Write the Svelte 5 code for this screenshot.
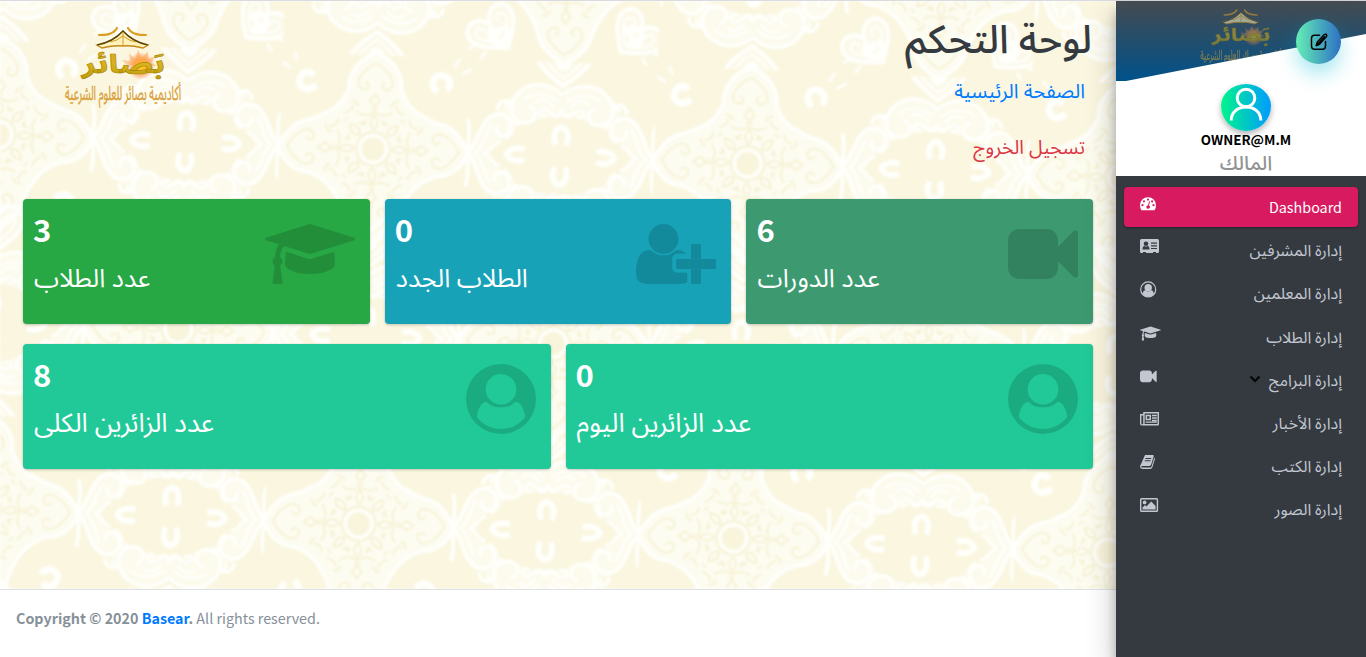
<script>
  const cards = [
    { value: 3, label: 'عدد الطلاب', color: '#28a745', icon: 'cap' },
    { value: 0, label: 'الطلاب الجدد', color: '#17a2b8', icon: 'plus' },
    { value: 6, label: 'عدد الدورات', color: '#3d9970', icon: 'video' },
    { value: 8, label: 'عدد الزائرين الكلى', color: '#20c997', icon: 'person', wide: true },
    { value: 0, label: 'عدد الزائرين اليوم', color: '#20c997', icon: 'person', wide: true }
  ];
  const menu = [
    { label: 'Dashboard', icon: 'gauge', active: true },
    { label: 'إدارة المشرفين', icon: 'id' },
    { label: 'إدارة المعلمين', icon: 'user' },
    { label: 'إدارة الطلاب', icon: 'cap' },
    { label: 'إدارة البرامج', icon: 'video', arrow: true },
    { label: 'إدارة الأخبار', icon: 'news' },
    { label: 'إدارة الكتب', icon: 'book' },
    { label: 'إدارة الصور', icon: 'image' }
  ];
  const quarters = [0, 90, 180, 270];
  const eighths = [0, 45, 90, 135, 180, 225, 270, 315];
  const mirrors = [[1, 1], [-1, 1], [1, -1], [-1, -1]];
  const capPath =
    'M1774 836l18 316q4 69-82 128t-235 93.5-323 34.5-323-34.5-235-93.5-82-128l18-316 574 181q22 7 48 7t48-7zm530-324q0 23-22 31l-1120 352q-4 1-10 1t-10-1L490 689q-43 34-71 111.5T385 979q63 36 63 109 0 69-58 107l58 433q2 14-8 25-9 11-24 11H224q-15 0-24-11-10-11-8-25l58-433q-58-38-58-107 0-73 65-111 11-207 98-330L22 543q-22-8-22-31t22-31L1142 129q4-1 10-1t10 1l1120 352q22 8 22 31z';
  const videoPath =
    'M1792 352v1088q0 42-39 59-13 5-25 5-27 0-45-19l-403-403v166q0 119-84.5 203.5t-203.5 84.5h-704q-119 0-203.5-84.5t-84.5-203.5v-704q0-119 84.5-203.5t203.5-84.5h704q119 0 203.5 84.5t84.5 203.5v165l403-402q18-19 45-19 12 0 25 5 39 17 39 59z';
  const plusPath =
    'M704 896q-159 0-271.5-112.5T320 512t112.5-271.5T704 128t271.5 112.5T1088 512 975.5 783.5 704 896zm960 128h352q13 0 22.5 9.5t9.5 22.5v192q0 13-9.5 22.5t-22.5 9.5h-352v352q0 13-9.5 22.5t-22.5 9.5h-192q-13 0-22.5-9.5t-9.5-22.5v-352h-352q-13 0-22.5-9.5t-9.5-22.5v-192q0-13 9.5-22.5t22.5-9.5h352V672q0-13 9.5-22.5t22.5-9.5h192q13 0 22.5 9.5t9.5 22.5v352zm-736 224q0 52 38 90t90 38h256v238q-68 50-171 50H267q-121 0-194-69T0 1365q0-53 3.5-103.5t14-109T44 1044t43-97.5 62-81 85.5-53.5T346 792q19 0 39 17 79 61 154.5 91.5T704 931t164.5-30.5T1023 809q20-17 39-17 132 0 217 96h-223q-52 0-90 38t-38 90v192z';
</script>

{#snippet logo()}
  <svg class="logo" viewBox="0 0 120 82" width="120" height="82">
    <defs>
      <linearGradient id="gold" x1="0" y1="0" x2="0" y2="1">
        <stop offset="0" stop-color="#e8a41c" /><stop offset=".5" stop-color="#d8b21c" /><stop offset="1" stop-color="#a98500" />
      </linearGradient>
      <radialGradient id="sun">
        <stop offset="0" stop-color="#ffd400" /><stop offset=".5" stop-color="#ff9d2e" stop-opacity=".8" /><stop offset="1" stop-color="#ff7a5c" stop-opacity="0" />
      </radialGradient>
    </defs>
    <circle cx="78" cy="39" r="14" fill="url(#sun)" />
    <path d="M64 38l-5-5 8 1-1-8 6 6 3-9 4 8 6-7 0 8 8-3-5 7 7 3z" fill="#ff9d4a" opacity=".45" />
    <path d="M36 8C42 8 50 8 54 1M83 8C77 8 69 8 65 1" fill="none" stroke="#dd9d22" stroke-width="2.200" stroke-linecap="round" />
    <path d="M34 18Q50 15 60 4Q70 15 85 18L80 21Q68 18 60 19Q52 18 39 21Z" fill="#fff2bd" stroke="#c38b18" stroke-width="1.300" />
    <path d="M34 18Q50 15 60 4Q70 15 85 18" fill="none" stroke="#51430f" stroke-width="1.200" />
    <path d="M60 5V19M47 15Q54 14 60 9Q66 14 73 15" fill="none" stroke="#d99b23" />
    <text class="name" x="19" y="46" textLength="83" lengthAdjust="spacingAndGlyphs" direction="rtl" text-anchor="end">بَصائر</text>
    <g transform="translate(0 73) scale(1 1.300)">
      <text class="motto" x="2" y="0" textLength="116" lengthAdjust="spacingAndGlyphs" direction="rtl" text-anchor="end">أكاديمية بصائر للعلوم الشرعية</text>
    </g>
  </svg>
{/snippet}

{#snippet bigIcon(name)}
  {#if name === 'cap'}
    <svg class="big" width="90" height="70" viewBox="0 0 2304 1792"><path d={capPath} /></svg>
  {:else if name === 'plus'}
    <svg class="big" width="80" height="70" viewBox="0 0 2048 1792"><path d={plusPath} /></svg>
  {:else if name === 'video'}
    <svg class="big" width="70" height="70" viewBox="0 0 1792 1792"><path d={videoPath} /></svg>
  {:else}
    <svg class="big" width="70" height="70" viewBox="0 0 70 70">
      <path fill-rule="evenodd" d="M35 0A35 35 0 1 1 35 70A35 35 0 1 1 35 0ZM35 10A15.3 15.3 0 1 0 35 40.6A15.3 15.3 0 1 0 35 10ZM10.7 52.7C12 45 15 38 20.5 37.7C24.5 42 29.5 43.3 35 43.3S45.5 42 49.5 37.7C55 38 58 45 59.3 52.7C53 61 44 65 35 65S17 61 10.7 52.7Z" />
    </svg>
  {/if}
{/snippet}

{#snippet navIcon(name)}
  <svg class="nav-icon" viewBox="0 0 22 18" width="22" height="18">
    {#if name === 'gauge'}
      <path fill-rule="evenodd" d="M8 2.2A8 8 0 0 0 0 10.3Q0 12.7 1.2 14.8Q1.5 15.3 2 15.3H14Q14.5 15.3 14.8 14.8Q16 12.700 16 10.3A8 8 0 0 0 8 2.2ZM8 3.5A1.1 1.1 0 1 1 8 5.700A1.1 1.1 0 1 1 8 3.5ZM4 5.2A1.1 1.1 0 1 1 4 7.400A1.1 1.1 0 1 1 4 5.2ZM2.500 9.100A1.1 1.1 0 1 1 2.500 11.300A1.1 1.1 0 1 1 2.500 9.100ZM13.500 9.100A1.1 1.1 0 1 1 13.500 11.300A1.1 1.1 0 1 1 13.500 9.100ZM12.100 5.300A1.1 1.1 0 1 1 12.100 7.500A1.1 1.1 0 1 1 12.100 5.300ZM9.100 6.300L10 6.500L9 10.400A1.800 1.800 0 1 1 8.100 10.200Z" />
    {:else if name === 'id'}
      <path fill-rule="evenodd" d="M1.500 1H17.500Q19 1 19 2.500V13.500Q19 15 17.500 15H16V14H13V15H6V14H3V15H1.500Q0 15 0 13.500V2.500Q0 1 1.500 1ZM6 3.500A2.300 2.300 0 1 0 6 8.100A2.300 2.300 0 1 0 6 3.500ZM2.500 11.500H9.500Q9.500 8 7.500 8Q6 9 4.500 8Q2.500 8 2.500 11.500ZM11 4.500V5.700H17V4.500ZM11 7.200V8.400H17V7.200ZM11 9.900V11.100H17V9.900Z" />
    {:else if name === 'user'}
      <circle cx="8.200" cy="8.400" r="7.500" fill="none" stroke="currentColor" stroke-width="1.200" />
      <circle cx="8.200" cy="6.700" r="3.700" />
      <path d="M2.500 13Q3 9.300 5.300 9.200Q8.200 12 11.100 9.200Q13.400 9.300 13.900 13Q11.700 15.800 8.200 15.800T2.500 13Z" />
    {:else if name === 'cap'}
      <g transform="translate(0 .3) scale(.0091)"><path d={capPath} /></g>
    {:else if name === 'video'}
      <g transform="translate(0 0) scale(.0093)"><path d={videoPath} /></g>
    {:else if name === 'news'}
      <path fill-rule="evenodd" d="M3.200 1H19V13Q19 14.500 17.700 14.500H1.900Q0 14.500 0 12.500V3H3.200ZM4.700 2.500V12.500Q4.700 12.900 4.500 13H17.200Q17.500 13 17.500 12.700V2.500ZM1.400 4.400V12.400A.9.9 0 0 0 3.200 12.400V4.400ZM5.600 3.800H11V9.200H5.600ZM7.100 5.300V7.700H9.500V5.300ZM12 3.800H16.800V5.200H12ZM12 6.300H16.800V7.700H12ZM12 8.800H16.800V10.200H12ZM5.600 10.400H16.800V11.800H5.600Z" />
    {:else if name === 'book'}
      <path fill-rule="evenodd" d="M5 1H12.800Q14 1.100 13.700 2.300L11.200 10.600Q10.800 12 9.500 12H2Q1 12 1.200 12.700Q1.400 13.500 2.400 13.500H10.300Q11.300 13.500 11.600 12.500L14.300 3.400Q15.200 4 14.900 5L12.500 13Q12 14.900 10 14.900H2.400Q0 14.900 0 12.500Q0 11.700.8 10.400ZM5.600 4L5.300 5H11L11.300 4ZM5 6.300L4.700 7.300H10.300L10.600 6.300Z" />
    {:else}
      <path fill-rule="evenodd" d="M1.500 1H16.700Q18.100 1 18.100 2.500V13.500Q18.100 15 16.700 15H1.500Q0 15 0 13.500V2.500Q0 1 1.500 1ZM1.400 2.400V13.600H16.700V2.400Z" />
      <circle cx="4.600" cy="5.400" r="1.900" />
      <path d="M2.500 12.600V10.400L5 8L6.400 9.400L11.200 4.600L15.600 9V12.600Z" />
    {/if}
  </svg>
{/snippet}

<div class="layout">
  <main>
    <div class="content">
      <svg class="damask" width="1116" height="588" aria-hidden="true">
        <defs>
          <g id="scroll" fill="none" stroke="#fffffb">
            <path d="M0 -61C10 -72 32 -76 46 -60Q54 -54 58 -44C80 -44 84 -10 93 0L70 0Q62 -14 50 -24Q36 -34 14 -38L0 -46Z" fill="#fffffb" fill-opacity=".5" stroke="none" />
            <path stroke-width="4" d="M0 -61C10 -72 32 -76 46 -60C56 -46 50 -32 36 -32C24 -33 24 -47 34 -49" />
            <path stroke-width="3" d="M4 -54C14 -62 30 -64 38 -55M8 -48C14 -56 22 -58 26 -52M6 -40C12 -42 14 -50 22 -44C24 -40 18 -38 15 -40" />
            <path stroke-width="4" d="M93 0C84 -8 82 -30 70 -38C58 -44 46 -34 52 -22C58 -14 68 -20 64 -28" />
            <path stroke-width="3" d="M86 0C76 -6 76 -22 70 -29M77 0C68 -4 66 -12 60 -12M48 -26q2 8 8 11M42 -30q4 -4 10 -2M58 -46q-4 -8 -10 -2" />
            <path stroke-width="4" d="M51 -52q12 -4 14 8M94 0q-4 -20 0 -34" />
          </g>
          <g id="lobes">
            {#each mirrors as [a, b]}<use href="#scroll" transform="scale({a} {b})" />{/each}
            <g fill="none" stroke="#fffffb" stroke-width="6">
              <path d="M-5 -11C-9 -20 -6 -28 0 -29C6 -28 9 -20 5 -11" />
              <path d="M-5 11C-9 20 -6 28 0 29C6 28 9 20 5 11" />
              <path d="M-36 -5C-44 -8 -52 -5 -54 0C-52 5 -44 8 -36 5" />
              <path d="M36 -5C44 -8 52 -5 54 0C52 5 44 8 36 5" />
            </g>
            <path d="M-10 -42q5 5 10 -2q5 7 10 2M-10 42q5 -5 10 2q5 -7 10 -2" fill="none" stroke="#fffffb" stroke-width="5" />
          </g>
          <g id="rosette">
            <path d="M0 -95C15 -92 28 -76 26 -60Q34 -40 48 -35Q60 -28 70 -26C82 -22 90 -10 95 0C90 15 78 26 64 25Q46 32 38 44Q30 55 27 66C24 80 12 90 0 95C-12 90 -24 80 -27 66Q-30 55 -38 44Q-46 32 -64 25C-78 26 -90 15 -95 0C-90 -10 -82 -22 -70 -26Q-60 -28 -48 -35Q-34 -40 -26 -60C-28 -76 -15 -92 0 -95Z" fill="#fdfcf1" stroke="#fffffb" stroke-width="4" />
            {#each quarters as a}
              <g transform="rotate({a})" fill="none" stroke="#f7f2d4" stroke-width="2">
                <path d="M0 -86C-14 -78 -22 -66 -14 -60C-7 -57 -4 -65 -10 -67M0 -86C14 -78 22 -66 14 -60C7 -57 4 -65 10 -67M0 -55l-5 7 5 6 5 -6z" />
                <path d="M-30 -35q8 -2 9 -9M30 -35q-8 -2 -9 -9M-18 -37q9 7 18 0q9 7 18 0M-24 -48q7 0 8 6M24 -48q-7 0 -8 6" />
                <path stroke="#fffffb" stroke-width="7" d="M62 -59C53 -68 59 -78 67 -76C75 -74 77 -66 71 -62" />
                <path stroke="#fffffb" stroke-width="3" d="M84 -94l-6 9 M96 -84l-10 6" />
              </g>
            {/each}
            {#each eighths as a}
              <g transform="rotate({a})" fill="none" stroke="#f5efcd" stroke-width="1.500"><path d="M0 -19q-7 -7 0 -15q7 8 0 15M-8 -29l-4 6M8 -29l4 6M-3 -40h6" /></g>
            {/each}
            <circle r="13" fill="#f9f5dc" stroke="#fffffb" stroke-width="3" />
            <circle r="17" fill="none" stroke="#f5efcd" stroke-width="1.500" />
          </g>
          <g id="heart" fill="none" stroke="#fffffb">
            <path stroke-width="4.500" fill="#fffffb" fill-opacity=".35" d="M0 27C-20 13 -34 0 -26 -14C-17 -24 -3 -18 0 -5C3 -18 17 -24 26 -14C34 0 20 13 0 27Z" />
            <path stroke-width="2.500" d="M0 19C-13 10 -24 -2 -18 -8C-12 -13 -7 -6 -11 -2M0 19C13 10 24 -2 18 -8C12 -13 7 -6 11 -2" />
            <path stroke-width="7" stroke-linecap="round" d="M-4 5q4 6 8 0" />
          </g>
          <pattern id="pat" width="375" height="375" patternUnits="userSpaceOnUse" patternTransform="translate(373 148) rotate(2.200) translate(-93.750 -93.750)">
            <g transform="translate(93.750 93.750)">
              {#each [[0, 0], [187.5, 187.5]] as [x, y]}<use href="#rosette" {x} {y} />{/each}
              {#each [[187.5, 0], [0, 187.5], [187.5, 375], [-187.5 + 375, -375]] as [x, y]}<use href="#lobes" {x} {y} />{/each}
              {#each [[187.5, 0], [0, 187.5]] as [x, y]}
                <use href="#heart" x={x} y={y - 97} />
                <use href="#heart" transform="translate({x} {y + 97}) scale(1 -1)" />
              {/each}
              {#each [-1, 1] as s}
                <use href="#heart" transform="translate({187.5 + s * 72} 250) rotate({s * 40}) scale(.9)" />
                <use href="#heart" transform="translate({187.5 + s * 72} 125) rotate({s * 140}) scale(.9)" />
              {/each}
            </g>
          </pattern>
        </defs>
        <rect width="1116" height="588" fill="#faf6df" />
        <rect width="1116" height="588" fill="url(#pat)" />
      </svg>
      <header>
        {@render logo()}
        <div class="heading">
          <h1 dir="rtl">لوحة التحكم</h1>
          <a href="#home" class="home" dir="rtl">الصفحة الرئيسية</a>
          <a href="#logout" class="logout" dir="rtl">تسجيل الخروج</a>
        </div>
      </header>
      <section class="cards">
        {#each cards as c}
          <article class:wide={c.wide} style="background:{c.color}">
            <div class="info">
              <strong>{c.value}</strong>
              <span dir="rtl">{c.label}</span>
            </div>
            {@render bigIcon(c.icon)}
          </article>
        {/each}
      </section>
    </div>
    <footer><b>Copyright © 2020 <a href="#basear">Basear</a>.</b> All rights reserved.</footer>
  </main>

  <aside>
    <div class="profile">
      <div class="banner">{@render logo()}</div>
      <button class="edit" aria-label="Edit">
        <svg width="20" height="20" viewBox="0 0 20 20" fill="none" stroke="#050505" stroke-width="1.500" stroke-linecap="round" stroke-linejoin="round">
          <path d="M10.500 3.200H5.500Q2.500 3.200 2.500 6.200V14Q2.500 17.300 5.500 17.300H13.500Q16.500 17.300 16.500 14V9.500" />
          <path d="M7.200 13.700L8.300 10L15.300 2.600Q16 1.900 17.200 2.300Q18.200 3.300 17.500 4.500L10.500 12.300ZM9.200 11.800L15.500 4.800" />
        </svg>
      </button>
      <div class="avatar">
        <svg width="50" height="48" viewBox="0 0 50 48" fill="none" stroke="#fff" stroke-width="3"><circle cx="25" cy="14" r="8.800" /><path d="M10.200 36.500C10.200 18.500 39.800 18.500 39.800 36.500" /></svg>
      </div>
      <div class="email">OWNER@M.M</div>
      <div class="role" dir="rtl">المالك</div>
    </div>
    <nav>
      {#each menu as m}
        <a href="#{m.icon}" class:active={m.active}>
          {@render navIcon(m.icon)}
          <span class="label">
            {#if m.arrow}<svg class="arrow" width="12" height="8" viewBox="0 0 12 8"><path d="M1.500 1.500L6 6L10.500 1.500" fill="none" stroke="#050505" stroke-width="2.200" /></svg>{/if}
            <span dir={m.active ? 'ltr' : 'rtl'}>{m.label}</span>
          </span>
        </a>
      {/each}
    </nav>
  </aside>
</div>

<style>
  :global(body) { margin: 0; overflow: hidden; }
  .layout { display: flex; height: 657px; box-sizing: border-box; border-top: 1px solid #d9dbe0; font-family: "Noto Sans CJK SC", "Noto Sans Arabic", "DejaVu Sans", sans-serif; background: #fff; }
  .layout svg { display: block; flex: none; }
  a { text-decoration: none; }
  .name, .motto, h1, .heading a, .info span, .role { font-family: "Noto Sans Arabic", "DejaVu Sans", sans-serif; }
  .logo { overflow: visible; }
  .name { font-size: 26px; font-weight: 700; fill: url(#gold); stroke: #a88908; stroke-width: .6px; }
  .motto { font-size: 15px; fill: #d9a03a; stroke: #d9a03a; stroke-width: .3px; }
  main { width: 1116px; display: flex; flex-direction: column; }
  .content { height: 588px; position: relative; overflow: hidden; isolation: isolate; }
  .layout .damask { position: absolute; inset: 0; z-index: -1; filter: blur(.8px); }
  header { height: 198px; display: flex; justify-content: space-between; padding: 0 24px 0 63px; box-sizing: border-box; }
  header .logo { margin-top: 26px; }
  .heading { display: flex; flex-direction: column; align-items: flex-end; padding-top: 10px; }
  h1 { margin: 0; height: 63px; line-height: 60px; color: #343a40; font-size: 39.200px; font-weight: 500; white-space: nowrap; }
  .heading a { height: 56px; line-height: 36px; padding-right: 7px; font-size: 20px; white-space: nowrap; }
  .heading .logout { font-size: 19.400px; }
  .home { color: #007bff; }
  .logout { color: #dc3545; }
  .cards { display: grid; grid-template-columns: repeat(6, 1fr); column-gap: 15px; row-gap: 20px; padding: 0 22.900px 0 23.100px; }
  article { grid-column: span 2; height: 125px; border-radius: 4px; color: #fff; display: flex; justify-content: space-between; padding: 0 15px 0 10px; box-sizing: border-box; box-shadow: 0 0 1px rgba(0,0,0,.13), 0 1px 3px rgba(0,0,0,.2); }
  article.wide { grid-column: span 3; }
  .info { display: flex; flex-direction: column; align-items: flex-start; padding-top: 8px; }
  .info span { font-size: 25.400px; line-height: 46px; padding-left: 1px; white-space: nowrap; }
  .wide .info span { font-size: 26.300px; }
  strong { font-size: 31px; line-height: 44px; height: 49px; font-weight: 700; }
  .big { fill: rgba(0,0,0,.15); margin-top: 20px; }
  footer { border-top: 1px solid #dee2e6; height: 67px; padding: 16px; box-sizing: border-box; color: #869099; font-size: 14.320px; line-height: 24px; background: #fff; }
  footer a { color: #007bff; }
  aside { width: 250px; background: #343a40; position: relative; z-index: 2; box-shadow: 0 14px 28px rgba(0,0,0,.25), 0 10px 10px rgba(0,0,0,.22); }
  .profile { height: 175px; background: #fff; display: flex; flex-direction: column; align-items: center; position: relative; }
  .banner { flex: none; width: 250px; height: 80px; background: linear-gradient(#454b50, #00528a); clip-path: polygon(0 0, 100% 0, 100% 33px, 10px 100%, 0 100%); display: flex; justify-content: center; }
  .banner .logo { width: 84px; height: 58px; margin: 8px 0 0 0; opacity: .55; }
  .edit { position: absolute; left: 180px; top: 18px; width: 45px; height: 45px; border: 0; border-radius: 50%; padding: 0; display: grid; place-items: center; background: linear-gradient(90deg, #64efb5, #2e70c4); box-shadow: 0 10px 20px rgba(0,190,215,.35); }
  .avatar { flex: none; margin: 3px 0 0 10px; width: 50px; height: 47px; border-radius: 25px 25px 25px 25px / 22px 22px 25px 25px; background: linear-gradient(90deg, #00f58b, #009bff); box-shadow: 0 3px 6px rgba(0,0,0,.3); }
  .email { flex: none; margin-left: 10px; color: #000; font-size: 13.350px; font-weight: 700; line-height: 17px; height: 18px; }
  .role { flex: none; margin: -1px 0 0 10px; color: #939393; font-size: 20px; font-weight: 500; line-height: 32px; height: 27px; }
  nav { padding: 11px 8px 0; display: flex; flex-direction: column; gap: 3.200px; }
  nav a { height: 40px; padding: 0 16px 2px; display: flex; justify-content: space-between; align-items: center; border-radius: 4px; color: #c2c7d0; font-size: 16.100px; box-sizing: border-box; }
  nav a.active { font-size: 14.350px; padding-bottom: 0; background: #d81b60; color: #fff; box-shadow: 0 1px 3px rgba(0,0,0,.12), 0 1px 2px rgba(0,0,0,.24); }
  .nav-icon { fill: currentColor; align-self: flex-start; margin-top: 8px; }
  .label { display: flex; align-items: center; gap: 8px; line-height: 24px; }
</style>
